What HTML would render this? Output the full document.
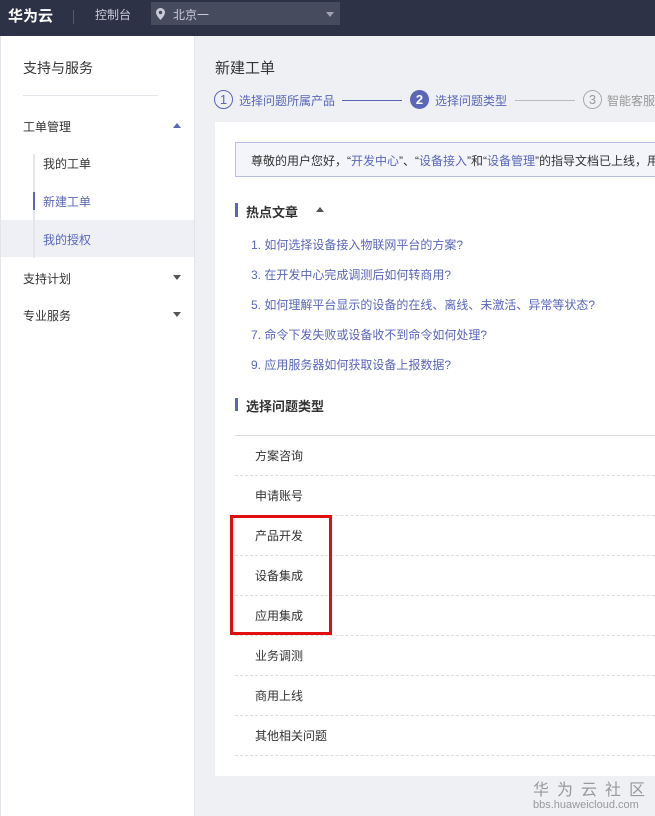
<!DOCTYPE html>
<html><head><meta charset="utf-8"><style>
*{margin:0;padding:0;box-sizing:border-box}
body{width:655px;height:816px;overflow:hidden;background:#eef0f4;font-family:"Liberation Sans","Noto Sans CJK SC",sans-serif;font-size:12px;color:#333;position:relative}
.a{position:absolute;white-space:nowrap}
.hdr{position:absolute;left:0;top:0;width:655px;height:36px;background:#2e3246}
.side{position:absolute;left:0;top:36px;width:195px;height:780px;background:#fff;border-left:1px solid #e3e5ea;border-right:1px solid #e3e5ea}
.card{position:absolute;left:215px;top:122px;width:440px;height:654px;background:#fff}
.lnk{color:#5a66b8}
.row{position:absolute;left:235px;width:420px;height:40px;border-bottom:1px dashed #ddd;padding-left:20px;line-height:40px;font-size:12px;color:#333}
.tri{position:absolute;width:0;height:0;border-left:4px solid transparent;border-right:4px solid transparent}
</style></head><body>
<div class="hdr"></div>
<div class="a" style="left:8px;top:5px;color:#fff;font-size:15px;font-weight:bold">华为云</div>
<div class="a" style="left:73px;top:10px;width:1px;height:14px;background:#555a6e"></div>
<div class="a" style="left:95px;top:6px;color:#c9ccd8;font-size:12px">控制台</div>
<div class="a" style="left:151px;top:2px;width:189px;height:23px;background:#474b5e"></div>
<svg class="a" style="left:156px;top:8px" width="9" height="12" viewBox="0 0 9 12"><path d="M4.5 0C2 0 0 2 0 4.5 0 7.5 4.5 12 4.5 12S9 7.5 9 4.5C9 2 7 0 4.5 0z" fill="#c9ccd8"/><circle cx="4.5" cy="4.5" r="1.7" fill="#474b5e"/></svg>
<div class="a" style="left:173px;top:6px;color:#c9ccd8;font-size:12px">北京一</div>
<div class="tri" style="left:326px;top:12px;border-top:5px solid #9ea2b2"></div>

<div class="side"></div>
<div class="a" style="left:23px;top:58px;font-size:14px;color:#333">支持与服务</div>
<div class="a" style="left:23px;top:95px;width:135px;height:1px;background:#e3e5ea"></div>
<div class="a" style="left:23px;top:118px;font-size:12px">工单管理</div>
<div class="tri" style="left:173px;top:123px;border-bottom:5px solid #5a66b8"></div>
<div class="a" style="left:1px;top:220px;width:193px;height:37px;background:#eef0f6"></div>
<div class="a" style="left:33px;top:154px;width:2px;height:104px;background:#e3e5ea"></div>
<div class="a" style="left:33px;top:192px;width:2px;height:18px;background:#5a66b8"></div>
<div class="a" style="left:43px;top:155px">我的工单</div>
<div class="a lnk" style="left:43px;top:193px">新建工单</div>
<div class="a lnk" style="left:43px;top:231px">我的授权</div>
<div class="a" style="left:23px;top:270px">支持计划</div>
<div class="tri" style="left:173px;top:275px;border-top:5px solid #555"></div>
<div class="a" style="left:23px;top:307px">专业服务</div>
<div class="tri" style="left:173px;top:312px;border-top:5px solid #555"></div>

<div class="a" style="left:215px;top:57px;font-size:15px;color:#333">新建工单</div>
<div class="a" style="left:214px;top:90px;width:19px;height:19px;border:1px solid #5a66b8;border-radius:50%;color:#5a66b8;text-align:center;line-height:17px;font-size:13px">1</div>
<div class="a lnk" style="left:239px;top:92px">选择问题所属产品</div>
<div class="a" style="left:342px;top:100px;width:60px;height:1px;background:#5a66b8"></div>
<div class="a" style="left:410px;top:90px;width:19px;height:19px;background:#5a66b8;border-radius:50%;color:#fff;text-align:center;line-height:19px;font-size:13px;font-weight:bold">2</div>
<div class="a lnk" style="left:435px;top:92px">选择问题类型</div>
<div class="a" style="left:515px;top:100px;width:60px;height:1px;background:#bbb"></div>
<div class="a" style="left:583px;top:90px;width:19px;height:19px;border:1px solid #aaa;border-radius:50%;color:#999;text-align:center;line-height:17px;font-size:13px">3</div>
<div class="a" style="left:607px;top:92px;color:#999">智能客服</div>

<div class="card"></div>
<div class="a" style="left:235px;top:142px;width:430px;height:35px;background:#f4f5fb;border:1px solid #b9bfe0"></div>
<div class="a" style="left:251px;top:152px">尊敬的用户您好，“<span class="lnk">开发中心</span>”、“<span class="lnk">设备接入</span>”和“<span class="lnk">设备管理</span>”的指导文档已上线，用</div>
<div class="a" style="left:235px;top:203px;width:3px;height:14px;background:#5a66b8"></div>
<div class="a" style="left:246px;top:202px;font-size:13px;font-weight:bold">热点文章</div>
<div class="tri" style="left:316px;top:207px;border-bottom:5px solid #555"></div>
<div class="a lnk" style="left:251px;top:236px">1. 如何选择设备接入物联网平台的方案?</div>
<div class="a lnk" style="left:251px;top:266px">3. 在开发中心完成调测后如何转商用?</div>
<div class="a lnk" style="left:251px;top:296px">5. 如何理解平台显示的设备的在线、离线、未激活、异常等状态?</div>
<div class="a lnk" style="left:251px;top:326px">7. 命令下发失败或设备收不到命令如何处理?</div>
<div class="a lnk" style="left:251px;top:356px">9. 应用服务器如何获取设备上报数据?</div>
<div class="a" style="left:235px;top:398px;width:3px;height:13px;background:#5a66b8"></div>
<div class="a" style="left:246px;top:396px;font-size:13px;font-weight:bold">选择问题类型</div>
<div class="a" style="left:235px;top:435px;width:420px;height:1px;background:#ddd"></div>
<div class="row" style="top:436px">方案咨询</div>
<div class="row" style="top:476px">申请账号</div>
<div class="row" style="top:516px">产品开发</div>
<div class="row" style="top:556px">设备集成</div>
<div class="row" style="top:596px">应用集成</div>
<div class="row" style="top:636px">业务调测</div>
<div class="row" style="top:676px">商用上线</div>
<div class="row" style="top:716px">其他相关问题</div>
<div class="a" style="left:230px;top:515px;width:102px;height:120px;border:3px solid #e01010"></div>

<div class="a" style="left:533px;top:776px;font-size:16px;color:#999;letter-spacing:8px">华为云社区</div>
<div class="a" style="left:533px;top:799px;font-size:11px;color:#999">bbs.huaweicloud.com</div>
</body></html>
